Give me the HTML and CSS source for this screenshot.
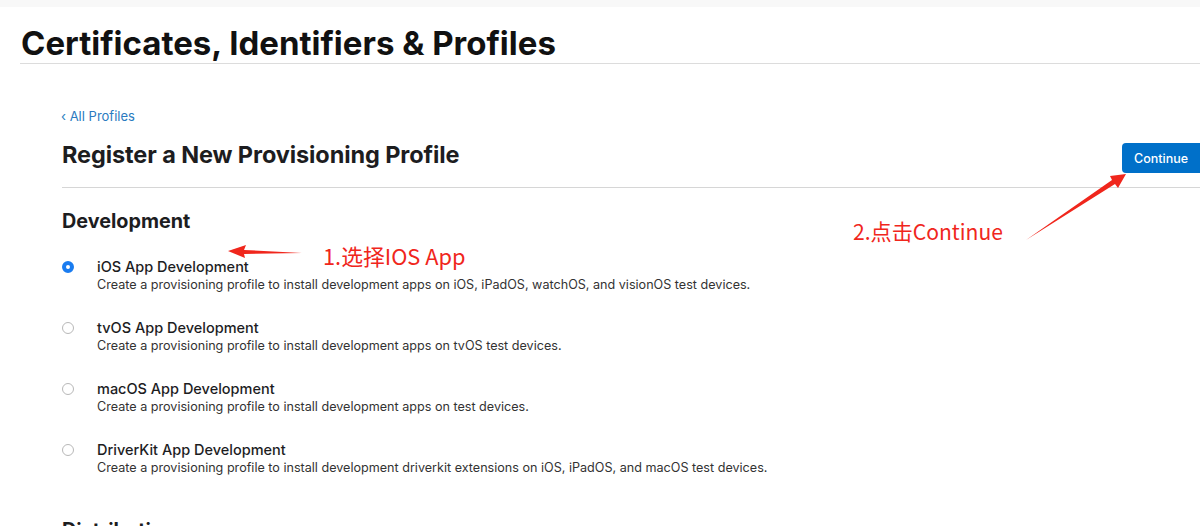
FILE: index.html
```html
<!DOCTYPE html>
<html lang="en">
<head>
<meta charset="utf-8">
<title>Certificates, Identifiers &amp; Profiles</title>
<link rel="stylesheet" href="styles.css">
</head>
<body>
<div class="topbar"></div>
<header class="page-header">
  <h1 class="page-title">Certificates, Identifiers &amp; Profiles</h1>
</header>
<main class="content">
  <a class="back-link" href="#">‹ All Profiles</a>
  <div class="title-row">
    <h2 class="section-title">Register a New Provisioning Profile</h2>
    <button class="btn-continue">Continue</button>
  </div>
  <section class="group">
    <h3 class="group-title">Development</h3>
    <ul class="options">
      <li class="option">
        <span class="radio checked"></span>
        <div class="option-text">
          <div class="option-name">iOS App Development</div>
          <div class="option-desc">Create a provisioning profile to install development apps on iOS, iPadOS, watchOS, and visionOS test devices.</div>
        </div>
      </li>
      <li class="option">
        <span class="radio"></span>
        <div class="option-text">
          <div class="option-name">tvOS App Development</div>
          <div class="option-desc">Create a provisioning profile to install development apps on tvOS test devices.</div>
        </div>
      </li>
      <li class="option">
        <span class="radio"></span>
        <div class="option-text">
          <div class="option-name">macOS App Development</div>
          <div class="option-desc">Create a provisioning profile to install development apps on test devices.</div>
        </div>
      </li>
      <li class="option">
        <span class="radio"></span>
        <div class="option-text">
          <div class="option-name">DriverKit App Development</div>
          <div class="option-desc">Create a provisioning profile to install development driverkit extensions on iOS, iPadOS, and macOS test devices.</div>
        </div>
      </li>
    </ul>
  </section>
  <section class="group">
    <h3 class="group-title">Distribution</h3>
  </section>
</main>

<div class="note note-1">1.选择IOS App</div>
<div class="note note-2">2.点击Continue</div>
<svg class="arrows" width="1200" height="526" viewBox="0 0 1200 526">
  <polygon points="228,251 246,245 244,250 302,253 244,254 245,258" fill="#f0261c"/>
  <polygon points="1126,174 1118,188 1115,184 1026,240 1112,180 1110,176" fill="#f0261c"/>
</svg>
</body>
</html>
```
FILE: styles.css
```css
html, body {
  margin: 0;
  padding: 0;
  background: #fff;
  width: 1200px;
  height: 526px;
  overflow: hidden;
  font-family: Inter, "Noto Sans", "Liberation Sans", "Noto Sans CJK SC", sans-serif;
  color: #1d1d1f;
}

.topbar {
  height: 7px;
  background: #f8f8f8;
}

.page-header {
  margin-left: 20px;
  border-bottom: 1px solid #dcdcdc;
  padding-top: 18px;
  padding-bottom: 1px;
}

.page-title {
  margin: 0 0 0 1px;
  font-size: 33px;
  font-weight: 700;
  letter-spacing: 0;
  line-height: 37px;
  color: #111;
}

.content {
  padding-left: 62px;
  padding-top: 44px;
}

.back-link {
  display: block;
  font-size: 13px;
  line-height: 16px;
  color: #2a7ac0;
  text-decoration: none;
  margin-left: -1px;
}

.title-row {
  display: flex;
  justify-content: space-between;
  align-items: flex-start;
  border-bottom: 1px solid #d6d6d6;
  padding-top: 19px;
  height: 64px;
  box-sizing: border-box;
}

.section-title {
  margin: -2px 0 0 0;
  font-size: 23.5px;
  font-weight: 700;
  line-height: 28px;
  color: #1d1d1f;
  letter-spacing: -0.1px;
}

.btn-continue {
  width: 78px;
  height: 30px;
  border: none;
  border-radius: 4px 0 0 4px;
  background: #0070c9;
  color: #fff;
  font-family: inherit;
  font-size: 12.5px;
  font-weight: 500;
  padding: 0;
}

.group-title {
  margin: 21px 0 0 0;
  font-size: 19.8px;
  font-weight: 700;
  line-height: 24px;
  color: #1d1d1f;
}

.options {
  list-style: none;
  margin: 0;
  padding: 25px 0 0 0;
}

.option {
  display: flex;
  align-items: flex-start;
  height: 61px;
}

.radio {
  width: 10px;
  height: 10px;
  border: 1px solid #b8b8b8;
  border-radius: 50%;
  margin-top: 3px;
  margin-right: 23px;
  box-sizing: content-box;
  flex: none;
}

.radio.checked {
  width: 4px;
  height: 4px;
  border: 4px solid #1a7cf0;
}

.option-name {
  font-size: 14.5px;
  font-weight: 500;
  line-height: 18px;
  color: #1d1d1f;
}

.option-desc {
  font-size: 12.6px;
  line-height: 18px;
  color: #333;
}

.group + .group .group-title {
  margin-top: 16px;
}

.note {
  position: absolute;
  color: #f0261c;
  font-size: 21.8px;
  line-height: 26px;
  font-family: "Noto Sans CJK SC", "Noto Sans", sans-serif;
}

.note-1 {
  left: 323px;
  top: 243px;
}

.note-2 {
  left: 853px;
  top: 218px;
  font-size: 21.1px;
}

.arrows {
  position: absolute;
  left: 0;
  top: 0;
  pointer-events: none;
}
```
